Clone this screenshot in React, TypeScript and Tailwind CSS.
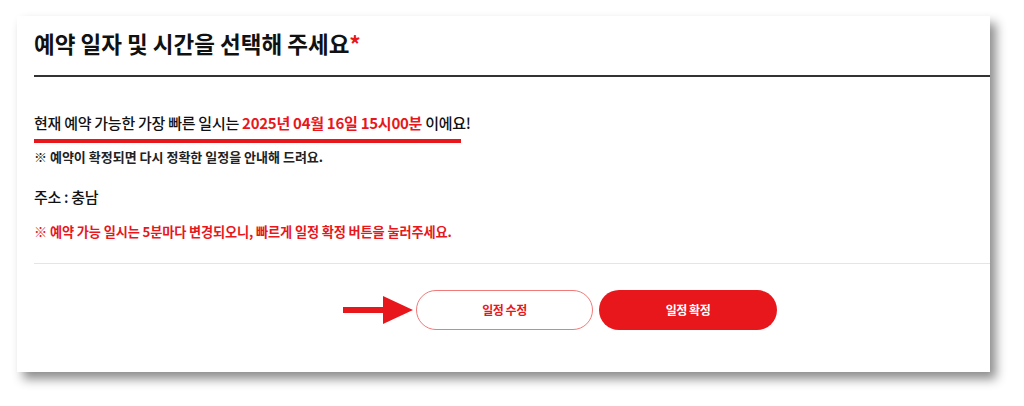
export default function App() {
  return (
    <div
      className="w-[1024px] h-[406px] bg-white pt-4 pl-[17px]"
      style={{ fontFamily: '"Noto Sans CJK KR", "Noto Sans", sans-serif' }}
    >
      <div className="w-[973px] h-[356px] bg-white shadow-[6px_7px_10px_rgba(0,0,0,0.45)] pl-[17px] flex flex-col">
        {/* Title */}
        <div className="h-[61px] flex items-center border-b-[2px] border-[#333] pb-[4px]">
          <h1 className="text-[22.5px] font-bold text-[#111]">
            예약 일자 및 시간을 선택해 주세요<span className="text-[#e8171c]">*</span>
          </h1>
        </div>

        {/* Body */}
        <div className="flex flex-col border-b border-[#e5e5e5] h-[187px] pt-[35px]">
          <p className="text-[15px] font-medium text-[#111] tracking-[-0.018em] leading-[22px]">
            현재 예약 가능한 가장 빠른 일시는{" "}
            <span className="font-bold text-[#e8171c]">2025년 04월 16일 15시00분</span> 이에요!
          </p>
          <div className="h-[4px] w-[427px] bg-[#e8171c] mt-[5px]" />
          <p className="mt-[5px] text-[13px] font-semibold text-[#222] leading-[18px]">
            ※ 예약이 확정되면 다시 정확한 일정을 안내해 드려요.
          </p>
          <p className="mt-[21px] text-[15px] font-medium text-[#111] tracking-[-0.02em] leading-[20px]">
            주소 : 충남
          </p>
          <p className="mt-[16px] text-[13.2px] font-bold text-[#e8171c] tracking-[-0.01em] leading-[18px]">
            ※ 예약 가능 일시는 5분마다 변경되오니, 빠르게 일정 확정 버튼을 눌러주세요.
          </p>
        </div>

        {/* Buttons */}
        <div className="flex items-center pt-[26px] pl-[309px]">
          <svg width="70" height="28" viewBox="0 0 70 28" className="mr-[3px]">
            <rect x="0" y="11" width="42" height="6" fill="#e8171c" />
            <polygon points="40,0 70,14 40,28" fill="#e8171c" />
          </svg>
          <button className="w-[177px] h-[40px] rounded-full border border-[#f07a7a] bg-white text-[12px] font-bold text-[#e8171c] tracking-[-0.04em]">
            일정 수정
          </button>
          <button className="ml-[6px] w-[178px] h-[40px] rounded-full bg-[#e8171c] text-[12px] font-bold text-white tracking-[-0.04em]">
            일정 확정
          </button>
        </div>
      </div>
    </div>
  );
}
